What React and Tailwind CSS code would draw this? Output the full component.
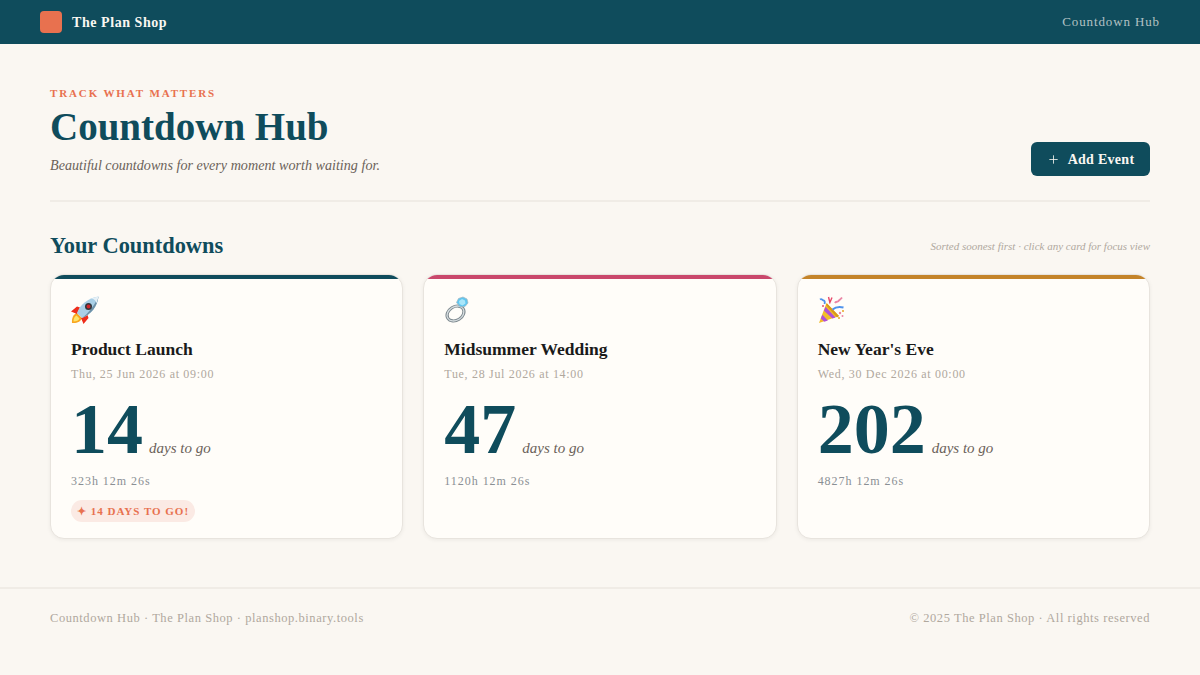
import React from 'react';
import { Plus } from 'lucide-react';

const serif = "font-['Liberation_Serif',serif]";

const RingIcon = () => (
  <svg width="28" height="28" viewBox="0 0 28 28" fill="none">
    <ellipse cx="11.5" cy="17.500" rx="9" ry="6.800" transform="rotate(-32 11.5 17.500)" stroke="#7f8a90" strokeWidth="3.200" />
    <ellipse cx="11.5" cy="17.500" rx="9" ry="6.800" transform="rotate(-32 11.5 17.500)" stroke="#d5dcdf" strokeWidth="1.300" />
    <path d="M12.500 6.500l2-4 4.500-1.500 4 2 1 4-3 3.500-5 .3z" fill="#62c6ef" stroke="#a4b8c0" strokeWidth="0.700" />
    <path d="M15 5l3-2 3 1.500.5 3-3 2-3-1.500z" fill="#a9e6fa" />
  </svg>
);

const PartyIcon = () => (
  <svg width="28" height="28" viewBox="0 0 28 28" fill="none">
    <path d="M1 27L8.500 7 21 20z" fill="#f2bd28" />
    <path d="M2.800 22.500l3.500 3.300 3.600-1.400-5.600-5.700zM6 14.800l8.500 7.800 3-1.200L7.500 10.800z" fill="#b050d6" />
    <path d="M9 7.500L21 20l-2 1.500L8 9z" fill="#d9971a" />
    <path d="M2 3.500c2-1.500 2 1 3.500 1S7 6.500 6.500 8" stroke="#4f93ec" strokeWidth="1.800" />
    <path d="M10.500 1l1.500 6M14 1.500l-2.500 6" stroke="#e8486a" strokeWidth="1.400" />
    <path d="M17 7c1-2 2.500-.5 3.500-2S22 4 24 1.500" stroke="#ea86a6" strokeWidth="2" />
    <path d="M14.500 13.500c3-2.500 7-3 11-2" stroke="#4f93ec" strokeWidth="2.200" />
    <circle cx="22" cy="17" r="1.200" fill="#ea86a6" />
    <circle cx="25" cy="15" r="1" fill="#e9a522" />
    <circle cx="24.500" cy="20" r="1" fill="#ea86a6" />
    <circle cx="21" cy="22" r="1" fill="#e9a522" />
    <circle cx="5" cy="10" r="1" fill="#e2506e" />
  </svg>
);

const RocketIcon = () => (
  <svg width="28" height="28" viewBox="0 0 28 28" fill="none">
    <path d="M1 27c-.5-5 1.500-9 5-10l5 5c-1 3.500-5 5.500-10 5z" fill="#f9a61f" />
    <path d="M2.500 25.500c0-3 1-5 3-6l3 3c-.6 2-3 3-6 3z" fill="#fde56a" />
    <path d="M0 15.500l6-5 3 1-3 6.500zM12.500 28l5-6-1-3-6.500 3z" fill="#ee2d1c" />
    <path d="M6 17C9 8.500 17 2 27.500.500 26.500 10.500 20 18.500 11 22z" fill="#a9cfe6" />
    <path d="M11 22c6-4.500 12-11.500 16.500-21.500C26.500 10.500 20 18.500 11 22z" fill="#6f92a8" />
    <path d="M20.500 2.300c2.400.6 4.400 2.500 5.200 5L27.500.500z" fill="#e6f0f6" />
    <circle cx="17.500" cy="10.500" r="3.500" fill="#33383d" />
    <circle cx="17.500" cy="10.500" r="1.900" fill="#d3262b" />
  </svg>
);

const events = [
  {
    id: 1,
    icon: <RocketIcon />,
    name: 'Product Launch',
    date: 'Thu, 25 Jun 2026 at 09:00',
    days: 14,
    rest: '323h 12m 26s',
    bar: 'bg-[#0f4c5c]',
    soon: '✦ 14 DAYS TO GO!',
  },
  {
    id: 2,
    icon: <RingIcon />,
    name: 'Midsummer Wedding',
    date: 'Tue, 28 Jul 2026 at 14:00',
    days: 47,
    rest: '1120h 12m 26s',
    bar: 'bg-[#c9486c]',
  },
  {
    id: 3,
    icon: <PartyIcon />,
    name: "New Year's Eve",
    date: 'Wed, 30 Dec 2026 at 00:00',
    days: 202,
    rest: '4827h 12m 26s',
    bar: 'bg-[#c4842a]',
  },
];

const EventCard = ({ event }) => (
  <div className="relative h-[265px] overflow-hidden rounded-[14px] border border-[#e8e4de] bg-[#fffdf9] px-5 pt-[21px] shadow-[0_1px_4px_rgba(0,0,0,0.06)]">
    <div className={`absolute inset-x-0 top-0 h-[3.500px] ${event.bar}`} />
    <div className="h-[28px]">{event.icon}</div>
    <h3 className="mt-[13px] text-[17.5px] leading-[24px] font-semibold text-[#1a1a1a]">{event.name}</h3>
    <p className="mt-[5px] text-[12px] leading-[16px] tracking-[0.057em] text-[#b0a89e]">{event.date}</p>
    <div className="mt-[15px] flex h-[64px] items-baseline gap-[6px]">
      <span className="text-[72px] leading-[64px] font-semibold text-[#0f4c5c]">{event.days}</span>
      <span className="text-[15px] text-[#6b6259] italic">days to go</span>
    </div>
    <p className="mt-[12px] text-[12px] leading-[16px] tracking-[0.08em] text-[#8a8f94]">{event.rest}</p>
    {event.soon && (
      <span className="mt-[11px] inline-block rounded-full bg-[#fbeae4] px-[6px] py-[3px] text-[11px] leading-[16px] font-semibold tracking-[0.09em] text-[#e8714f]">
        {event.soon}
      </span>
    )}
  </div>
);

const App = () => {
  return (
    <div className={`flex min-h-[675px] flex-col bg-[#faf7f2] ${serif}`}>
      <header className="flex h-11 items-center justify-between bg-[#0f4c5c] px-10">
        <div className="flex items-center gap-[10px]">
          <div className="h-[22px] w-[22px] rounded-[4px] bg-[#e8714f]" />
          <span className="text-[14px] font-semibold tracking-[0.04em] text-[#faf7f2]">The Plan Shop</span>
        </div>
        <span className="text-[13px] tracking-[0.068em] text-[#faf7f2]/70">Countdown Hub</span>
      </header>

      <main className="flex-1 px-[50px]">
        <div className="flex items-end justify-between border-b-2 border-[#f0ece6] pt-[42px] pb-6">
          <div>
            <p className="text-[11px] leading-[14px] font-semibold tracking-[0.17em] text-[#e8714f]">TRACK WHAT MATTERS</p>
            <h1 className="mt-[3px] text-[39px] leading-[48px] font-semibold text-[#0f4c5c]">Countdown Hub</h1>
            <p className="mt-[4px] text-[14.150px] leading-[21px] text-[#6b6259] italic">
              Beautiful countdowns for every moment worth waiting for.
            </p>
          </div>
          <button className="flex h-[34px] w-[119px] items-center justify-center gap-2 rounded-[6px] bg-[#0f4c5c] text-[14px] font-semibold tracking-[0.02em] text-[#faf7f2]">
            <Plus size={13} strokeWidth={1.5} />
            <span>Add Event</span>
          </button>
        </div>

        <div className="mt-[29px] flex items-center justify-between">
          <h2 className="text-[22.400px] leading-[30px] font-semibold text-[#0f4c5c]">Your Countdowns</h2>
          <span className="text-[11px] text-[#b0a89e] italic">Sorted soonest first · click any card for focus view</span>
        </div>

        <div className="mt-[13px] grid grid-cols-3 gap-5">
          {events.map((event) => (
            <EventCard key={event.id} event={event} />
          ))}
        </div>
      </main>

      <footer className="flex h-[88px] items-start justify-between border-t-2 border-[#f0ece6] px-[50px] pt-[21px] text-[12.500px] leading-[16px] tracking-[0.045em] text-[#b0a89e]">
        <span>Countdown Hub · The Plan Shop · planshop.binary.tools</span>
        <span>© 2025 The Plan Shop · All rights reserved</span>
      </footer>
    </div>
  );
};

export default App;
